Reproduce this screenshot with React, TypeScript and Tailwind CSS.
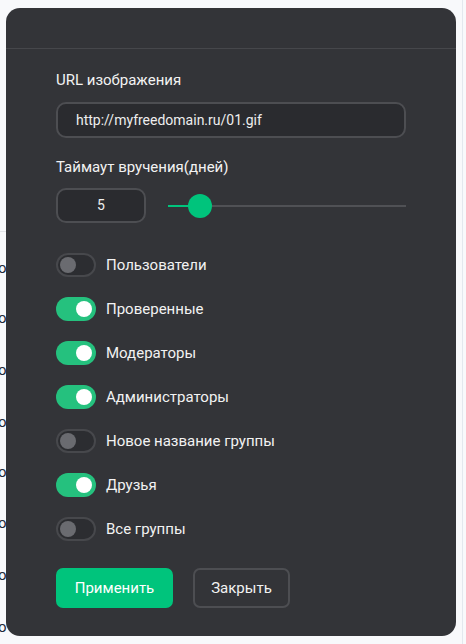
import React from "react";

const font = { fontFamily: "Roboto, 'Noto Sans', sans-serif" };

function Toggle({ on }: { on: boolean }) {
  return on ? (
    <div className="w-[40px] h-[24px] rounded-full bg-[#25c17e] flex items-center justify-end pr-[4px] shrink-0">
      <div className="w-[16px] h-[16px] rounded-full bg-white" />
    </div>
  ) : (
    <div className="w-[40px] h-[24px] rounded-full border-2 border-[#47484c] bg-[#2c2d31] flex items-center pl-[2px] shrink-0">
      <div className="w-[16px] h-[16px] rounded-full bg-[#6a6b70]" />
    </div>
  );
}

const groups: [string, boolean][] = [
  ["Пользователи", false],
  ["Проверенные", true],
  ["Модераторы", true],
  ["Администраторы", true],
  ["Новое название группы", false],
  ["Друзья", true],
  ["Все группы", false],
];

export default function App() {
  const bgRows = [268, 318, 370, 422, 472, 523, 575, 627];
  return (
    <div className="relative w-[466px] h-[644px] overflow-hidden bg-[#f8f9fb]" style={font}>
      {/* background page content */}
      <div className="absolute left-0 top-[231px] w-[10px] h-px bg-[#e2e4e8]" />
      {bgRows.map((y) => (
        <div
          key={y}
          className="absolute left-[-2px] text-[15px] leading-[20px] text-[#1d2a3a]"
          style={{ top: y - 10 }}
        >
          о
        </div>
      ))}
      <div className="absolute left-[462px] top-0 w-px h-full bg-[#e3e8ee]" />

      {/* modal */}
      <div className="absolute left-[6px] top-[8px] w-[450px] h-[628px] rounded-[14px] bg-[#333438] flex flex-col">
        <div className="h-[41px] border-b border-[#46474b] shrink-0" />
        <div className="flex flex-col px-[50px]">
          <div className="mt-[21px] text-[15px] leading-[20px] text-[#f2f2f2]">URL изображения</div>
          <div className="mt-[12px] w-[350px] h-[36px] rounded-[10px] border-2 border-[#4d4e52] bg-[#2a2b2f] flex items-center pl-[18px] text-[14px] text-[#eeeeee]">
            http://myfreedomain.ru/01.gif
          </div>
          <div className="mt-[19px] text-[15px] leading-[20px] text-[#f2f2f2]">Таймаут вручения(дней)</div>
          <div className="mt-[11px] flex items-center">
            <div className="w-[90px] h-[35px] rounded-[10px] border-2 border-[#4d4e52] bg-[#2a2b2f] flex items-center justify-center text-[14px] text-[#eeeeee]">
              5
            </div>
            <div className="relative ml-[22px] w-[238px] h-[24px] flex items-center">
              <div className="w-full h-[2px] bg-[#505155]" />
              <div className="absolute left-0 top-[11px] w-[32px] h-[2px] bg-[#00c47c]" />
              <div className="absolute left-[20px] top-0 w-[24px] h-[24px] rounded-full bg-[#00c47c]" />
            </div>
          </div>
          <div className="mt-[30px] flex flex-col gap-[20px]">
            {groups.map(([name, on]) => (
              <div key={name} className="flex items-center h-[24px]">
                <Toggle on={on} />
                <span className="ml-[10px] text-[15px] text-[#f2f2f2]">{name}</span>
              </div>
            ))}
          </div>
          <div className="mt-[27px] flex gap-[20px]">
            <button className="w-[117px] h-[40px] rounded-[7px] bg-[#00c47c] text-[15px] text-white">Применить</button>
            <button className="w-[97px] h-[40px] rounded-[7px] border-2 border-[#4d4e52] text-[15px] text-[#f2f2f2]">Закрыть</button>
          </div>
        </div>
      </div>
    </div>
  );
}
